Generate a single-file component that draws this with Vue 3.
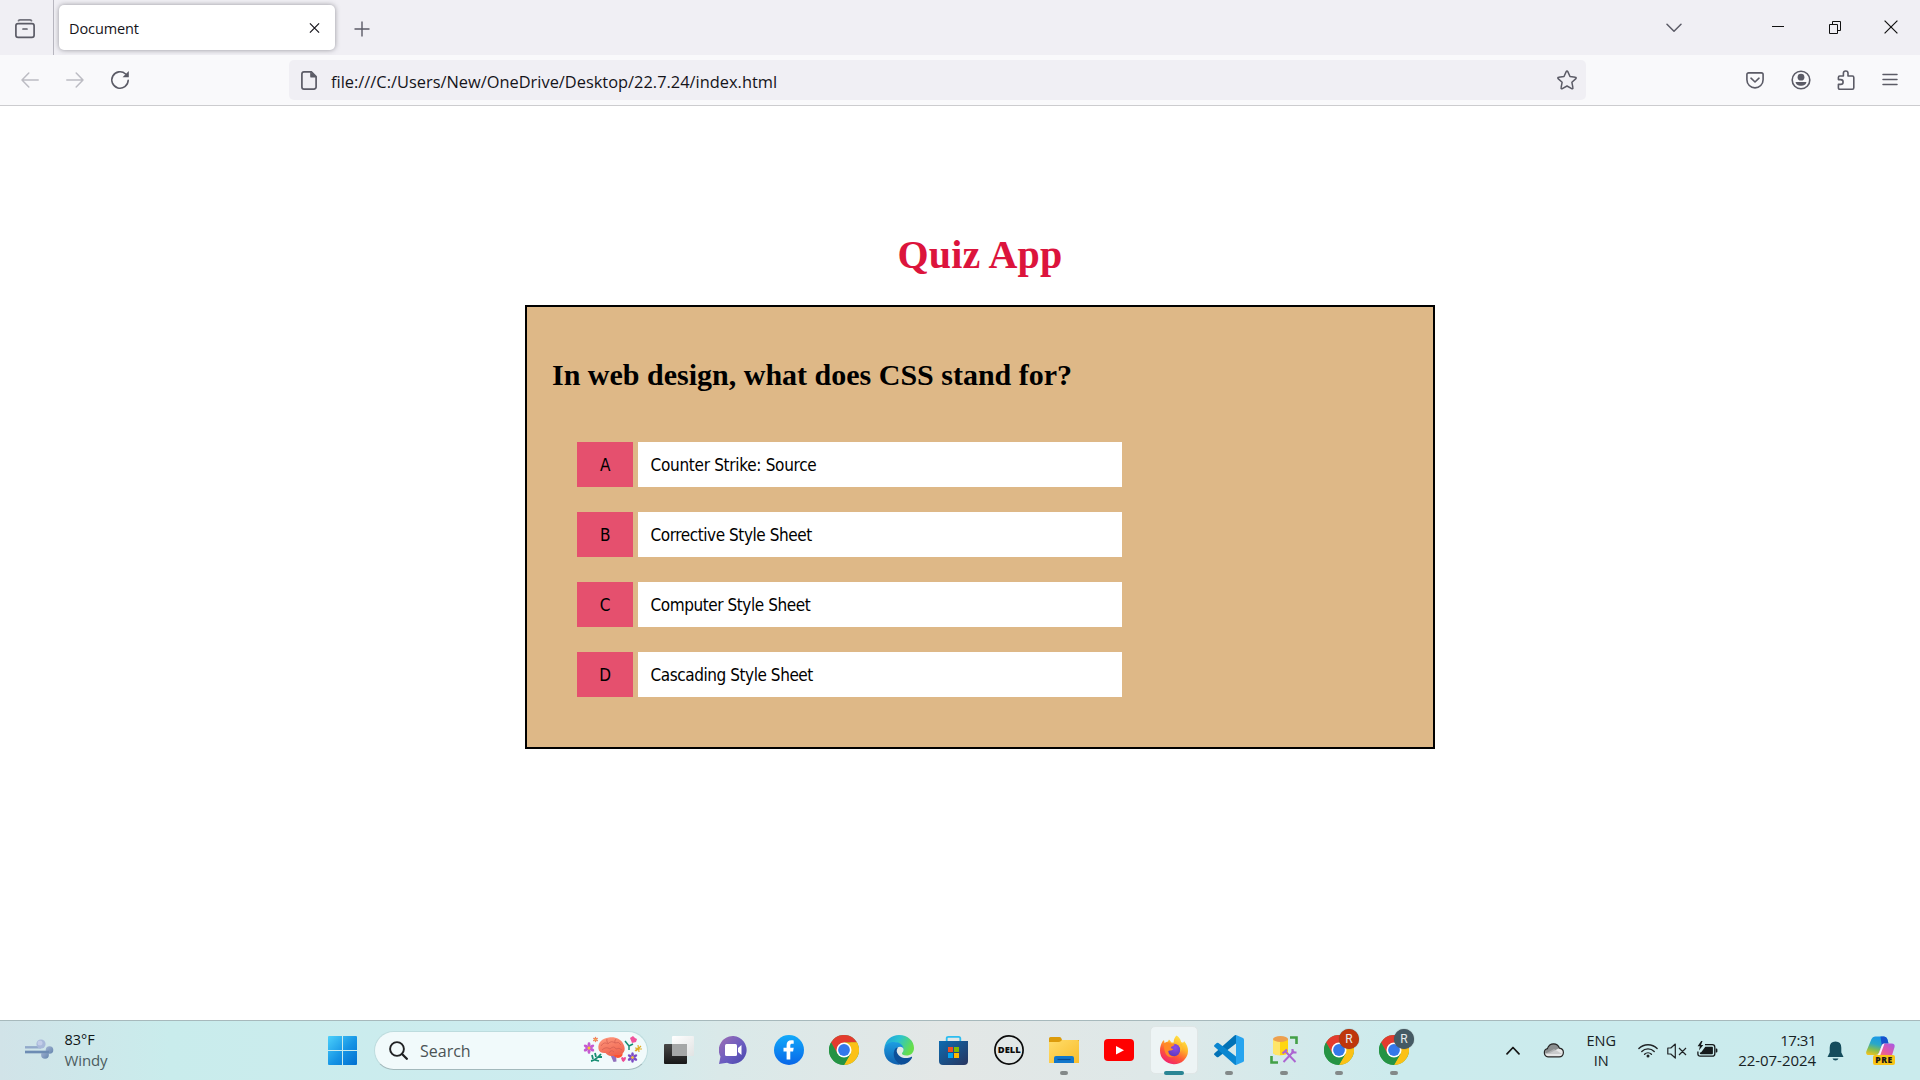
<script setup>
const answers = [
  { letter: 'A', text: 'Counter Strike: Source' },
  { letter: 'B', text: 'Corrective Style Sheet' },
  { letter: 'C', text: 'Computer Style Sheet' },
  { letter: 'D', text: 'Cascading Style Sheet' }
]

const profiles = [
  { initial: 'R', color: '#bf360c' },
  { initial: 'R', color: '#455a64' }
]
</script>

<template>
  <div class="screen">
    <!-- Tab strip -->
    <header class="tabstrip">
      <div class="view-btn">
        <svg width="20" height="20" viewBox="0 0 20 20" fill="none" stroke="#5b5b66" stroke-width="1.7" stroke-linecap="round">
          <path d="M3.500 1.700Q4 .9 5.200.9h9.600Q16 .9 16.500 1.700" stroke="#75757f" />
          <rect x=".9" y="4.600" width="18.200" height="13.800" rx="2.200" />
          <path d="M8 10h4" />
        </svg>
      </div>
      <div class="tab">
        <span class="tab-title">Document</span>
        <svg width="11" height="12" viewBox="0 0 12 12" fill="none" stroke="#15141a" stroke-width="1.300"><path d="M1 1l10 10M11 1L1 11" /></svg>
      </div>
      <svg class="new-tab" width="16" height="16" viewBox="0 0 16 16" fill="none" stroke="#5b5b66" stroke-width="1.400"><path d="M8 .5v15M.5 8h15" /></svg>
      <div class="window-controls">
        <svg class="list-tabs" width="16" height="10" viewBox="0 0 16 10" fill="none" stroke="#5b5b66" stroke-width="1.500" stroke-linecap="round" stroke-linejoin="round"><path d="M1 1.200l7 7 7-7" /></svg>
        <svg class="min" width="12" height="14" viewBox="0 0 12 14"><path d="M0 5.500h12" stroke="#111" /></svg>
        <svg class="restore" width="13" height="14" viewBox="0 0 13 14" fill="none" stroke="#111"><path d="M.5 3.500h8v9h-8zM3.500 3.500v-3h8v9h-3" /></svg>
        <svg width="14" height="14" viewBox="0 0 14 14" fill="none" stroke="#111" stroke-width="1.200"><path d="M.6.6l12.800 12.800M13.400.6L.6 13.400" /></svg>
      </div>
    </header>

    <!-- Navigation toolbar -->
    <nav class="toolbar">
      <div class="nav-icons">
        <svg width="18" height="16" viewBox="0 0 18 16" fill="none" stroke="#bcbcc3" stroke-width="1.500" stroke-linecap="round" stroke-linejoin="round"><path d="M17.200 8H1M7.800 1L1 8l6.800 7" /></svg>
        <svg width="18" height="16" viewBox="0 0 18 16" fill="none" stroke="#bcbcc3" stroke-width="1.500" stroke-linecap="round" stroke-linejoin="round"><path d="M.8 8H17M10.200 1L17 8l-6.800 7" /></svg>
        <svg width="20" height="20" viewBox="0 0 20 20"><path d="M18.200 10.200a8.200 8.200 0 1 1-2.600-6.200" fill="none" stroke="#5b5b66" stroke-width="1.600" stroke-linecap="round" /><path d="M18.800 1v6.200h-6.200z" fill="#5b5b66" /></svg>
      </div>
      <div class="urlbar">
        <svg width="16" height="19" viewBox="0 0 16 19"><path d="M3 .9h7.400L15.100 5.600v10.300a2.200 2.200 0 0 1-2.200 2.200H3A2.200 2.200 0 0 1 .9 15.900V3A2.200 2.200 0 0 1 3 .9z" fill="none" stroke="#5b5b66" stroke-width="1.700" /><path d="M9.200.8v4.600q0 1.200 1.200 1.200H15.500z" fill="#5b5b66" /></svg>
        <span class="url">file:///C:/Users/New/OneDrive/Desktop/22.7.24/index.html</span>
        <svg width="20" height="20" viewBox="0 0 20 20" fill="none" stroke="#5b5b66" stroke-width="1.500" stroke-linejoin="round"><path d="M9.200 1.600a.9.900 0 0 1 1.600 0l2.200 4.900 5.400.7a.8.800 0 0 1 .5 1.400l-4 3.700 1 5.400a.8.800 0 0 1-1.200.9L10 16l-4.700 2.600a.8.800 0 0 1-1.200-.9l1-5.400-4-3.700a.8.800 0 0 1 .5-1.400L7 6.500z" /></svg>
      </div>
      <div class="tool-icons">
        <svg width="18" height="17" viewBox="0 0 18 17" fill="none" stroke="#5b5b66" stroke-width="1.600" stroke-linecap="round" stroke-linejoin="round"><path d="M2.600.9h12.800a1.700 1.700 0 0 1 1.700 1.700v5.200a8.100 8.100 0 0 1-16.200 0V2.600A1.700 1.700 0 0 1 2.600.9z" /><path d="M5 6.200l4 3.800 4-3.800" /></svg>
        <svg width="20" height="20" viewBox="0 0 20 20"><circle cx="10" cy="10" r="8.800" fill="none" stroke="#5b5b66" stroke-width="1.600" /><circle cx="10" cy="7.200" r="3.400" fill="#5b5b66" /><path d="M4.600 12h10.800c0 2.400-2.600 3.800-5.400 3.800S4.600 14.400 4.600 12z" fill="#5b5b66" /></svg>
        <svg width="18" height="20" viewBox="0 0 18 20" fill="none" stroke="#5b5b66" stroke-width="1.600" stroke-linejoin="round"><path d="M1.400 9.600V7.400q0-1.400 1.400-1.400h3.600V3.300a2.300 2.300 0 0 1 4.600 0V6h4.400q1.400 0 1.400 1.400v10.400q0 1.400-1.400 1.400H2.800q-1.400 0-1.400-1.400v-3.400h2.300a2.400 2.400 0 0 0 0-4.800z" /></svg>
        <svg width="16" height="14" viewBox="0 0 16 14" stroke="#5b5b66" stroke-width="1.500" stroke-linecap="round"><path d="M1 1.500h14M1 6.500h14M1 11.500h14" /></svg>
      </div>
    </nav>

    <!-- Page -->
    <main class="page-body">
      <h1>Quiz App</h1>
      <section class="quiz">
        <h2>In web design, what does CSS stand for?</h2>
        <ul>
          <li v-for="a in answers" :key="a.letter">
            <span class="letter">{{ a.letter }}</span>
            <span class="answer">{{ a.text }}</span>
          </li>
        </ul>
      </section>
    </main>

    <!-- Taskbar -->
    <footer class="taskbar">
      <div class="weather">
        <svg width="30" height="22" viewBox="0 0 30 22" fill="none">
          <defs><linearGradient id="wind" x1="0" y1="0" x2="1" y2="1"><stop offset="0" stop-color="#a3b4d3" /><stop offset="1" stop-color="#6485ad" /></linearGradient></defs>
          <path d="M1 9.300h16" stroke="#91a9ca" stroke-width="2.400" /><circle cx="17" cy="6" r="4.600" fill="#a9b9da" /><circle cx="16" cy="5" r="2.500" fill="#c3cde8" />
          <path d="M1 14h22" stroke="#7d9abd" stroke-width="2.400" /><circle cx="25.500" cy="12" r="3.800" fill="url(#wind)" /><circle cx="21" cy="16.800" r="3.900" fill="url(#wind)" /><path d="M1 14h24" stroke="#6d8cb3" stroke-width="2.400" />
        </svg>
        <div class="weather-text"><span class="temp">83°F</span><span class="cond">Windy</span></div>
      </div>

      <svg class="start" width="29" height="29" viewBox="0 0 29 29">
        <defs><linearGradient id="win" gradientUnits="userSpaceOnUse" x1="0" y1="0" x2="29" y2="29"><stop offset="0" stop-color="#4bd0fb" /><stop offset=".55" stop-color="#1593e4" /><stop offset="1" stop-color="#006fd0" /></linearGradient></defs>
        <path d="M1 0h13v14H0V1q0-1 1-1zM15 0h13q1 0 1 1v13H15zM0 15h14v14H1q-1 0-1-1zM15 15h14v13q0 1-1 1H15z" fill="url(#win)" />
      </svg>

      <div class="search">
        <svg class="glass" width="19" height="19" viewBox="0 0 19 19" fill="none" stroke="#1f2123" stroke-width="1.900" stroke-linecap="round"><circle cx="8" cy="8" r="6.900" /><path d="M13 13l4.800 4.800" stroke-width="2.300" /></svg>
        <span>Search</span>
        <svg class="brain" width="60" height="28" viewBox="0 0 60 28">
          <defs>
            <g id="blossom"><ellipse cy="-3.300" rx="1.500" ry="2.600" /><ellipse cy="-3.300" rx="1.500" ry="2.600" transform="rotate(60)" /><ellipse cy="-3.300" rx="1.500" ry="2.600" transform="rotate(120)" /><ellipse cy="-3.300" rx="1.500" ry="2.600" transform="rotate(180)" /><ellipse cy="-3.300" rx="1.500" ry="2.600" transform="rotate(240)" /><ellipse cy="-3.300" rx="1.500" ry="2.600" transform="rotate(300)" /><circle r="1.500" fill="#f7c52e" /></g>
            <linearGradient id="lobe" x1="0" y1="0" x2=".4" y2="1"><stop offset="0" stop-color="#ff9a80" /><stop offset="1" stop-color="#f0654f" /></linearGradient>
          </defs>
          <path d="M27 18l6 0 .5 7.500-3 .5z" fill="#9271bd" />
          <path d="M30 19q3 4.500 8 2 2.500-2 1-4.500z" fill="#ff512e" />
          <path d="M15.500 13C14.500 7 19 2 26 1.500c7-.8 12 2 14 6 2.500 4 2.300 8-1 10.500-3 2-5.500.4-8 1.500-4 1.500-7-.5-8.500-2.500-4 .3-6.500-1-7-4z" fill="url(#lobe)" />
          <path d="M18 10q3-5 7-2 3-4 7-1 4-2 6 2M19 14q4-4 8-1 4-4 6 0 3-2 6 1M26 17q2-4 5-1M24 3q-1 2 1 4M33 3q-2 2-1 4" fill="none" stroke="#d05b50" stroke-width=".7" />
          <use href="#blossom" x="6" y="12" fill="#c55bd0" />
          <use href="#blossom" transform="translate(12.500 3.500) scale(.48)" fill="#f0805e" />
          <use href="#blossom" transform="translate(49.500 21.500) scale(.9)" fill="#7c4cc4" />
          <path d="M8 25q5-1 10-7M10 23l-1-4M13 21l-1-4M12 24l4 1M15 21l4 0" fill="none" stroke="#158d72" stroke-width="1.800" />
          <path d="M42 5l4 5 4-2M46 9v5" fill="none" stroke="#158d72" stroke-width="1.500" />
          <path d="M47 2l3-2 2 2 2 1-1 3-4 1z" fill="#f0529c" />
          <path d="M38 22q2-2 2.500 0 2-2 2.500 0 0 2-2.500 4-2-1-2.500-4z" fill="#ee4d96" />
          <path d="M52 12l7 1M55 9l1 7M58 10l-5 5M52 15l2-2" stroke="#e0ab24" stroke-width="1.200" />
        </svg>
      </div>

      <div class="apps">
        <div class="slot">
          <svg width="30" height="30" viewBox="0 0 30 30">
            <defs><linearGradient id="tvd" x1="0" y1="0" x2="0" y2="1"><stop offset="0" stop-color="#484848" /><stop offset="1" stop-color="#181818" /></linearGradient><linearGradient id="tvl" x1="0" y1="0" x2="1" y2="1"><stop offset="0" stop-color="#fff" /><stop offset="1" stop-color="#e1e3e3" /></linearGradient></defs>
            <rect y="9" width="23" height="20" rx="1" fill="url(#tvd)" /><rect x="8" y="1" width="22" height="20" rx="1" fill="url(#tvl)" /><path d="M8 9h15v12H8z" fill="#a5a7a7" />
          </svg>
        </div>
        <div class="slot">
          <svg width="30" height="30" viewBox="0 0 30 30">
            <defs><linearGradient id="chat" x1="0" y1="0" x2="1" y2="1"><stop offset="0" stop-color="#a06eb4" /><stop offset=".55" stop-color="#6a5cc0" /><stop offset="1" stop-color="#4947ac" /></linearGradient></defs>
            <path d="M14.500 1a14 14 0 1 1-6.500 26.800L0 29l1.500-7.500A14 14 0 0 1 14.500 1z" fill="url(#chat)" /><rect x="6" y="9" width="12" height="12" rx="1.500" fill="#fff" /><path d="M19 13l3.500-3v10L19 17z" fill="#fff" />
          </svg>
        </div>
        <div class="slot">
          <svg width="30" height="30" viewBox="0 0 30 30">
            <defs><linearGradient id="fb" x1="0" y1="0" x2="0" y2="1"><stop offset="0" stop-color="#12aafa" /><stop offset="1" stop-color="#0866e8" /></linearGradient></defs>
            <circle cx="15" cy="15" r="15" fill="url(#fb)" /><path d="M12.600 24.500V16.500H9.500v-3.800h3.100v-2.400c0-3.300 1.700-5 4.700-5 1.200 0 2.400.2 2.400.2v3.200h-1.500c-1.400 0-1.900.7-1.900 1.700v2.300h3.400l-.6 3.800h-2.800v8z" fill="#fff" />
          </svg>
        </div>
        <div class="slot">
          <svg width="30" height="30" viewBox="0 0 30 30">
            <defs>
              <g id="chrome">
                <circle cx="15" cy="15" r="15" fill="#34a853" />
                <path d="M2 7.500A15 15 0 0 1 28 7.500H15L8.500 18.800z" fill="#e33b2e" />
                <path d="M28 7.500A15 15 0 0 1 15 30l6.500-11.200V7.500z" fill="#fbc116" /><path d="M15 7.500h13l.5 1.200L21.500 18.800z" fill="#fbc116" />
                <path d="M2 7.500A15 15 0 0 0 15 30l6.500-11.200H8.500z" fill="#259344" />
                <circle cx="15" cy="15" r="7.500" fill="#fff" /><circle cx="15" cy="15" r="5.900" fill="#3478ea" />
              </g>
            </defs>
            <use href="#chrome" />
          </svg>
        </div>
        <div class="slot">
          <svg width="30" height="30" viewBox="0 0 30 30">
            <defs>
              <linearGradient id="e1" x1="0" y1="0" x2="1" y2=".4"><stop offset="0" stop-color="#1c9de0" /><stop offset=".5" stop-color="#2bc3cf" /><stop offset="1" stop-color="#66de4b" /></linearGradient>
              <linearGradient id="e2" x1="0" y1="0" x2="0" y2="1"><stop offset="0" stop-color="#1d9ee2" /><stop offset="1" stop-color="#0f5fae" /></linearGradient>
            </defs>
            <path d="M.3 13C1.500 5 7.500 0 15 0c9 0 15 6 15 13 0 5-3.500 7.500-7.500 7.500-3.500 0-5-1.500-4.500-2.500 1-1 1.500-2 1.500-3.500C19.500 9.500 13 7 8.500 8 4 9 1 11 .3 13z" fill="url(#e1)" />
            <path d="M.2 14C1 9.500 5 7 10 7c6 0 9.600 3.500 9.600 7-1-2.500-4-3-6-1.500-2.500 2-3.500 5-2.500 8 1.500 4.500 5 7.500 9 8-10 4-21-3-19.900-14.500z" fill="url(#e2)" />
            <path d="M11.500 13.500C8 18 9.500 26 17 29.700c5 0 9-3 11-7 .3-.8-.3-1.300-1-.8-3 1.600-9 2-12.500-2-2.200-2.400-2.400-5-.5-7.400q-1.500 0-2.500 1z" fill="#0c4f99" />
          </svg>
        </div>
        <div class="slot">
          <svg width="30" height="30" viewBox="0 0 30 30">
            <defs><linearGradient id="store" x1="0" y1="0" x2="1" y2="1"><stop offset="0" stop-color="#0d6bb0" /><stop offset="1" stop-color="#28355f" /></linearGradient></defs>
            <path d="M7.700 6V3.500q0-1.700 1.700-1.700h10.200q1.700 0 1.700 1.700V6" fill="none" stroke="#2dbdf0" stroke-width="1.800" /><path d="M0 6h29v20q0 4-4 4H4q-4 0-4-4z" fill="url(#store)" />
            <path d="M9 12h5v5H9z" fill="#f25022" /><path d="M15 12h5v5h-5z" fill="#7fba00" /><path d="M9 18h5v5H9z" fill="#00a4ef" /><path d="M15 18h5v5h-5z" fill="#ffb900" />
          </svg>
        </div>
        <div class="slot">
          <svg width="30" height="30" viewBox="0 0 30 30">
            <circle cx="15" cy="15" r="14.100" fill="none" stroke="#0b0b0b" stroke-width="1.700" />
            <text x="3.800" y="18.400" class="dell" textLength="23" lengthAdjust="spacingAndGlyphs">DELL</text>
          </svg>
        </div>
        <div class="slot running">
          <svg width="30" height="30" viewBox="0 0 30 30">
            <defs><linearGradient id="fold" x1="0" y1="0" x2="1" y2="1"><stop offset="0" stop-color="#ffdc6a" /><stop offset="1" stop-color="#f9bd2c" /></linearGradient></defs>
            <path d="M0 3.500Q0 2 1.500 2h9q1 0 1.700 1L13 5H30v5H0z" fill="#dc9b0b" /><path d="M0 7h9.500q1.500 0 2.500-1l1-1h15.500Q30 5 30 6.500V28H0z" fill="url(#fold)" /><path d="M5 28v-5q0-2 2-2h16q2 0 2 2v5z" fill="#1277cb" /><path d="M8.500 24.500h13" stroke="#0a4b91" stroke-width="1.200" />
          </svg>
        </div>
        <div class="slot">
          <svg width="30" height="30" viewBox="0 0 30 30"><rect y="4" width="30" height="22" rx="4" fill="#f00" /><path d="M12 11l8 4.200-8 4.200z" fill="#fff" /></svg>
        </div>
        <div class="slot active">
          <svg width="30" height="30" viewBox="0 0 30 30">
            <defs>
              <linearGradient id="ff" x1=".8" y1="0" x2=".25" y2="1"><stop offset="0" stop-color="#fff04e" /><stop offset=".35" stop-color="#ffb629" /><stop offset=".65" stop-color="#ff5a35" /><stop offset="1" stop-color="#ef1c75" /></linearGradient>
              <radialGradient id="ffg" cx=".6" cy=".3" r=".7"><stop offset="0" stop-color="#8d4bea" /><stop offset="1" stop-color="#5d3bbd" /></radialGradient>
            </defs>
            <path d="M17.500.5c2 1 4 3.500 4.600 6.500C24 8 25 7.500 25 6c3 3 4 7 4 10A14 13.500 0 0 1 1 15.500C1 12 2 9 3.500 6.500L5 5l.5 3q2-1.500 3.500-1.500l1-2 2.500 3h2.200C14.500 4.500 16 2 17.500.5z" fill="url(#ff)" />
            <circle cx="15" cy="15" r="6.200" fill="url(#ffg)" />
            <path d="M5 9c2.500-1.800 5-1.800 7-.5l3.600.8c0 1.800-3.600 2-3.600 3.200 0 1 1.200 1.400 2.500 1.500-1.500 2-3.500 1-5.200 2C9 20 12.500 22 15.500 21.500 10 24 4.500 20 5 9z" fill="#ff8a27" />
            <path d="M19 9q3.500 3.500 2 8 3-3 2-8z" fill="#ffbd2f" />
          </svg>
        </div>
        <div class="slot running">
          <svg width="30" height="30" viewBox="0 0 30 30">
            <path d="M22 0l7 3q1 .5 1 1.600v20.800q0 1.100-1 1.600l-7 3z" fill="#27a4ef" /><path d="M22 0v8.500L4.500 22q-1 .7-1.800 0L.5 20q-.9-.9 0-1.700L20.500.5q.8-.6 1.500-.5z" fill="#0272b6" /><path d="M22 30v-8.500L4.500 8q-1-.7-1.800 0L.5 10q-.9.900 0 1.700l20 17.800q.8.600 1.500.5z" fill="#0a86d0" />
          </svg>
        </div>
        <div class="slot running">
          <svg width="30" height="30" viewBox="0 0 30 30">
            <path d="M4 4v13.500a7.500 2.800 0 0 0 15 0V4z" fill="#ffd60f" /><path d="M4 4v13.500a7.500 2.800 0 0 0 7 2.800V4z" fill="#ffe568" /><ellipse cx="11.500" cy="4" rx="7.500" ry="3" fill="#eda04e" />
            <path d="M21 2.500h6.500V9M2.500 21v6.500H9" fill="none" stroke="#43a047" stroke-width="2.600" />
            <path d="M14.500 27l10.500-11M26.500 27L16.500 16.500" stroke="#ac65d1" stroke-width="1.900" /><path d="M13.500 18.500l4.500-4M23.500 14v3.500h4" fill="none" stroke="#ac65d1" stroke-width="2.200" />
          </svg>
        </div>
        <div v-for="(p, i) in profiles" :key="i" class="slot running">
          <svg width="30" height="30" viewBox="0 0 30 30"><use href="#chrome" /></svg>
          <span class="profile" :style="{ background: p.color }">{{ p.initial }}</span>
        </div>
      </div>

      <div class="tray">
        <svg class="up" width="14" height="9" viewBox="0 0 14 9" fill="none" stroke="#151515" stroke-width="1.700" stroke-linecap="round" stroke-linejoin="round"><path d="M1 7.800L7 1.500l6 6.300" /></svg>
        <svg class="cloud" width="21" height="15" viewBox="0 0 21 15"><path d="M5 13.900a4.200 4.200 0 0 1-.6-8.200C5.500 2.500 8 .8 10.600.8c3 0 5 1.700 5.800 4.300 2.300.3 4 2 4 4.500 0 2.600-1.800 4.300-4.200 4.300z" fill="#e6e7e7" /><path d="M2 10.500q0-4 3-4.800C6 2.400 8.200.8 10.600.8c3 0 5 1.700 5.800 4.300L7 10z" fill="#8b8e8f" /><path d="M2 11l9-5 8 5z" fill="#bdbfc0" opacity=".7" /><path d="M5 13.900a4.200 4.200 0 0 1-.6-8.200C5.500 2.500 8 .8 10.600.8c3 0 5 1.700 5.800 4.300 2.300.3 4 2 4 4.500 0 2.600-1.800 4.300-4.200 4.300z" fill="none" stroke="#252525" stroke-width="1.200" /></svg>
        <div class="lang"><span>ENG</span><span>IN</span></div>
        <svg class="wifi" width="20" height="15" viewBox="0 0 20 15" fill="none" stroke="#202426" stroke-width="1.400" stroke-linecap="round"><path d="M.9 5.600a12.600 12.600 0 0 1 18.200 0M3.800 8.500a8.700 8.700 0 0 1 12.400 0M6.600 11.200a4.900 4.900 0 0 1 6.800 0" /><circle cx="10" cy="13" r="1.500" fill="#202426" stroke="none" /></svg>
        <svg class="speaker" width="20" height="16" viewBox="0 0 20 16" fill="none" stroke="#202426" stroke-width="1.200" stroke-linejoin="round"><path d="M.8 5v6h3l4.500 4V1L3.800 5zM12 5l7 7M19 5l-7 7" /></svg>
        <svg class="battery" width="21" height="17" viewBox="0 0 21 17"><path d="M8 3.700h7.300q2.500 0 2.500 2.500v6.500q0 2.500-2.500 2.500H3.200Q.9 15.200.9 13V10.500" fill="none" stroke="#15191b" stroke-width="1.300" /><path d="M8.300 5.700h6.700q.9 0 .9.900v5.700q0 .9-.9.900H3.800q-.9 0-.9-.9v-.9q1 .3 1.700-.6zM18.700 7.500h.7q1 0 1 1v2q0 1-1 1h-.7zM4.200 0L.6 5.300H2.900L1.900 9.500 6.300 4H4L5.500 0z" fill="#15191b" /></svg>
        <div class="clock"><span class="time">17:31</span><span>22-07-2024</span></div>
        <svg class="bell" width="17" height="20" viewBox="0 0 17 20" fill="#154c5c"><path d="M8.500.5q5.800 0 5.800 6.200v4.800L16.500 16H.5l2.200-4.500V6.700Q2.700.5 8.500.5zM5.500 17.500h6q-.7 2-3 2t-3-2z" /></svg>
        <div class="copilot">
          <svg width="30" height="29" viewBox="0 0 30 29">
            <defs><linearGradient id="cp1" x1=".5" y1="0" x2=".2" y2="1"><stop offset="0" stop-color="#1998e8" /><stop offset=".4" stop-color="#2aa8c8" /><stop offset=".7" stop-color="#84bd50" /><stop offset="1" stop-color="#f2c31b" /></linearGradient><linearGradient id="cp2" x1="1" y1="0" x2="0" y2="1"><stop offset="0" stop-color="#a45be8" /><stop offset=".5" stop-color="#e458a4" /><stop offset="1" stop-color="#ff8845" /></linearGradient></defs>
            <path d="M5.500 3Q6.500.5 9 .5h9q2.500 0 3.300 2.500l1.200 4.500h-4q-2 0-2.700 2.200L13 16.500q-.8 2.500-3.500 2.500H3q-3.500 0-2.700-3.500z" fill="url(#cp1)" />
            <path d="M14.500.5H18q2.500 0 3.300 2.500l1.200 4.500h-4q-2 0-2.700 2.200z" fill="#1652cd" />
            <path d="M18.500 7.500h7q4 0 3 3.800l-2.500 8q-.8 2.700-3.500 2.700H9l2.500-3q1.200-.6 1.500-2.500l2.800-7q.7-2 2.700-2z" fill="url(#cp2)" /><path d="M15.800 9.500L13 17l-1.500 2h2.800l4.200-11.500q-2 0-2.700 2z" fill="#f6f6ff" />
          </svg>
          <span class="pre">PRE</span>
        </div>
      </div>
    </footer>
  </div>
</template>

<style>
body { margin: 0; overflow: hidden; }
</style>

<style scoped>
.screen { width: 1920px; height: 1080px; display: flex; flex-direction: column; background: #fff; font-family: "Open Sans", "Noto Sans", sans-serif; color: #15141a; overflow: hidden; }
svg { display: block; flex: none; }

.tabstrip { height: 55px; flex: none; display: flex; align-items: flex-start; background: #f0eff4; box-sizing: border-box; }
.view-btn { width: 53px; height: 55px; border-right: 1px solid #b7b6bf; }
.view-btn svg { margin: 19px 0 0 15px; }
.tab { width: 276px; height: 45px; box-sizing: border-box; margin: 5px 0 0 5px; padding: 0 15px 0 10px; display: flex; align-items: center; justify-content: space-between; background: #fff; border-radius: 5px; box-shadow: 0 0 5px rgba(60, 60, 70, .5); }
.tab-title { font-size: 14.5px; letter-spacing: -.1px; line-height: 20px; padding-top: 2px; }
.new-tab { margin: 21px 0 0 18.5px; }
.window-controls { margin: 20px 22px 0 auto; display: flex; align-items: flex-start; }
.list-tabs { margin: 3px 90px 0 0; }
.min { margin: 1px 45px 0 0; }
.restore { margin: 1px 42px 0 0; }

.toolbar { height: 50px; flex: none; display: flex; align-items: center; background: #f9f9fb; border-bottom: 1px solid #cccccf; }
.nav-icons { width: 289px; padding-left: 21px; box-sizing: border-box; display: flex; align-items: center; gap: 27px; }
.nav-icons svg:last-child { margin-left: -1px; }
.urlbar { width: 1297px; height: 40px; display: flex; align-items: center; background: #f0eff4; border-radius: 5px; box-sizing: border-box; padding: 0 9px 0 12px; }
.url { font-size: 16.4px; line-height: 24px; margin: 3px auto 0 14px; }
.tool-icons { flex: 1; display: flex; align-items: center; justify-content: space-between; padding: 0 22px 0 160px; }

.page-body { height: 914px; flex: none; display: flex; flex-direction: column; align-items: center; padding-left: 40px; box-sizing: border-box; }
h1 { margin: 126px 0 27px; font: bold 40px/46px "Liberation Serif", serif; letter-spacing: .2px; color: crimson; }
.quiz { width: 910px; height: 444px; box-sizing: border-box; border: 2px solid #000; background: burlywood; padding: 50px 25px 0; }
h2 { margin: 0; font: bold 30px/36px "Liberation Serif", serif; color: #000; }
ul { list-style: none; margin: 49px 0 0; padding: 0 0 0 25px; display: flex; flex-direction: column; gap: 25px; }
li { display: flex; gap: 5px; font: 17px/47px "DejaVu Sans Condensed", "DejaVu Sans", sans-serif; letter-spacing: -.3px; color: #000; }
.letter { width: 56px; height: 45px; background: #e5506e; text-align: center; }
.answer { width: 484px; height: 45px; box-sizing: border-box; padding-left: 12.6px; background: #fff; }
li:nth-child(n + 2) .answer { letter-spacing: -.44px; }

.taskbar { height: 60px; flex: none; box-sizing: border-box; border-top: 1px solid #a7b9bc; display: flex; align-items: center; background: linear-gradient(90deg, #d1e3e8 0, #c9ecec 170px, #cdecef 570px, #dae9e9 720px, #e3e7e6 950px, #dee8e8 1150px, #ccebed 1400px, #caebed 1920px); }
.weather { width: 328px; display: flex; align-items: center; }
.weather svg { margin-left: 24px; margin-top: -3px; }
.weather-text { margin-left: 10.5px; display: flex; flex-direction: column; font-size: 15px; line-height: 20px; margin-top: -2px; }
.temp { font-size: 14.5px; color: #101617; }
.cond { color: #4c5c5f; letter-spacing: -.1px; }
.start { margin-right: 17px; margin-top: -1px; }
.search { width: 274px; height: 39px; box-sizing: border-box; border: 1px solid #bddcde; border-bottom-color: #a3b9bc; border-radius: 20px; background: #f1fafb; display: flex; align-items: center; font-size: 16px; color: #4b5355; margin-top: -1px; }
.glass { margin: 0 12px 0 14px; }
.search span { line-height: 22px; padding-top: 1px; }
.brain { margin: 0 4px 0 auto; }

.apps { display: flex; margin-left: 3px; height: 59px; }
.slot { width: 55px; height: 59px; display: flex; align-items: center; justify-content: center; position: relative; box-sizing: border-box; padding-bottom: 2px; }
.slot svg { position: relative; }
.dell { font: 800 9.5px "Open Sans", sans-serif; fill: #0b0b0b; }
.running::after, .active::after { content: ""; position: absolute; bottom: 5px; width: 8px; height: 4px; border-radius: 2px; background: #838989; }
.active::after { width: 20px; background: #2a8594; }
.active::before { content: ""; position: absolute; left: 3.5px; top: 5px; width: 48px; height: 48px; box-sizing: border-box; border: 1px solid #dfe6e6; border-radius: 5px; background: #edf4f5; }
.profile { position: absolute; left: 28px; top: 8px; width: 20px; height: 20px; border-radius: 50%; box-shadow: 0 0 1px #4a4a4a; color: #e6eaec; font: 12px/20px Roboto, sans-serif; text-align: center; }

.tray { margin-left: auto; display: flex; align-items: center; margin-right: 24px; color: #182225; font-size: 15px; line-height: 20px; }
.up { margin-right: 23px; }
.cloud { margin-right: 22px; }
.lang { width: 30px; display: flex; flex-direction: column; align-items: center; font-size: 14.5px; margin-right: 22px; }
.wifi { margin-right: 9px; }
.speaker { margin-right: 10px; }
.battery { margin-right: 20px; margin-top: -3px; }
.clock { display: flex; flex-direction: column; align-items: flex-end; margin-right: 11px; margin-top: -2px; letter-spacing: -.05px; }
.time { letter-spacing: -.5px; }
.bell { margin-right: 22px; }
.copilot { position: relative; }
.pre { position: absolute; left: 7px; top: 19px; width: 22px; height: 10px; border-radius: 2px; background: #f8c416; color: #171717; font: 800 8.5px/10px "Open Sans", sans-serif; text-align: center; letter-spacing: .5px; }
</style>
